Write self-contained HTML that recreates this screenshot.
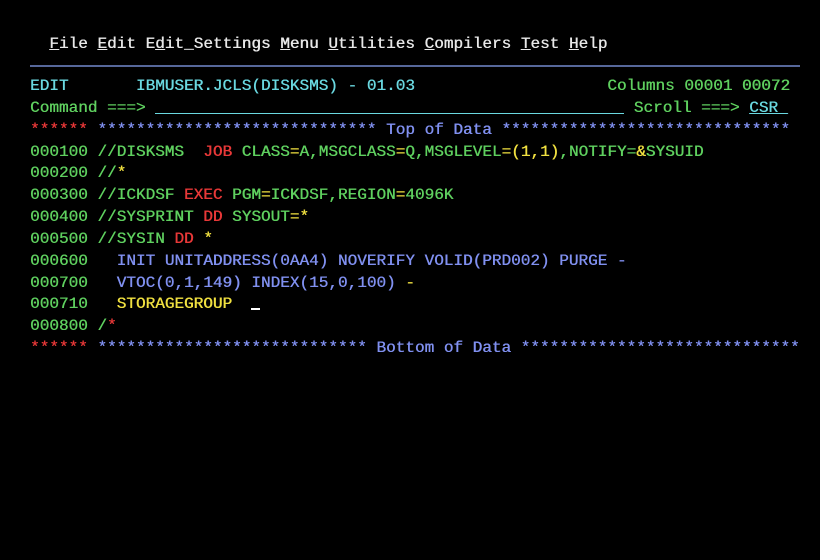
<!DOCTYPE html>
<html><head><meta charset="utf-8"><style>
html,body{margin:0;padding:0;background:#000;width:820px;height:560px;overflow:hidden}
pre{position:absolute;left:30px;margin:0;font-family:"Liberation Mono","DejaVu Sans Mono",monospace;font-size:16.05px;line-height:21.85px;white-space:pre;color:#5fd05f;text-shadow:0.4px 0 currentColor}
.w{color:#e8e8e8}.g{color:#5fd05f}.c{color:#6ad8e0}.b{color:#8090f0}.r{color:#e83838}.y{color:#f0e040}
.u{text-decoration:underline}
.fld{display:inline-block;width:469px;height:15px;border-bottom:1.5px solid #6ad8e0;vertical-align:top}
.cur{display:inline-block;width:9px;height:2px;background:#fff;vertical-align:middle;position:relative;top:5px}
</style></head><body>
<pre style="top:34px" class="w">  <span class="u">F</span>ile <span class="u">E</span>dit E<span class="u">d</span>it_Settings <span class="u">M</span>enu <span class="u">U</span>tilities <span class="u">C</span>ompilers <span class="u">T</span>est <span class="u">H</span>elp</pre>
<div style="position:absolute;left:30px;top:65px;width:770px;height:2px;background:#56679a"></div>
<pre style="top:76px"><span class="c">EDIT       IBMUSER.JCLS(DISKSMS) - 01.03</span>                    <span class="g">Columns 00001 00072</span>
<span class="g">Command ===> </span><span class="fld"></span> <span class="g">Scroll ===> </span><span class="c u">CSR </span>
<span class="r">******</span> <span class="b">***************************** Top of Data ******************************</span>
<span class="g">000100 //DISKSMS  </span><span class="r">JOB</span> <span class="g">CLASS</span><span class="y">=</span><span class="g">A,MSGCLASS</span><span class="y">=</span><span class="g">Q,MSGLEVEL</span><span class="y">=(1,1)</span><span class="g">,NOTIFY=</span><span class="y">&amp;</span><span class="g">SYSUID</span>
<span class="g">000200 //</span><span class="y">*</span>
<span class="g">000300 //ICKDSF </span><span class="r">EXEC</span> <span class="g">PGM</span><span class="y">=</span><span class="g">ICKDSF,REGION</span><span class="y">=</span><span class="g">4096K</span>
<span class="g">000400 //SYSPRINT </span><span class="r">DD</span> <span class="g">SYSOUT</span><span class="y">=*</span>
<span class="g">000500 //SYSIN </span><span class="r">DD</span> <span class="y">*</span>
<span class="g">000600   </span><span class="b">INIT UNITADDRESS(0AA4) NOVERIFY VOLID(PRD002) PURGE -</span>
<span class="g">000700   </span><span class="b">VTOC(0,1,149) INDEX(15,0,100) </span><span class="y">-</span>
<span class="g">000710   </span><span class="y">STORAGEGROUP</span>  <span class="cur"></span>
<span class="g">000800 /</span><span class="r">*</span>
<span class="r">******</span> <span class="b">**************************** Bottom of Data *****************************</span></pre>
</body></html>
